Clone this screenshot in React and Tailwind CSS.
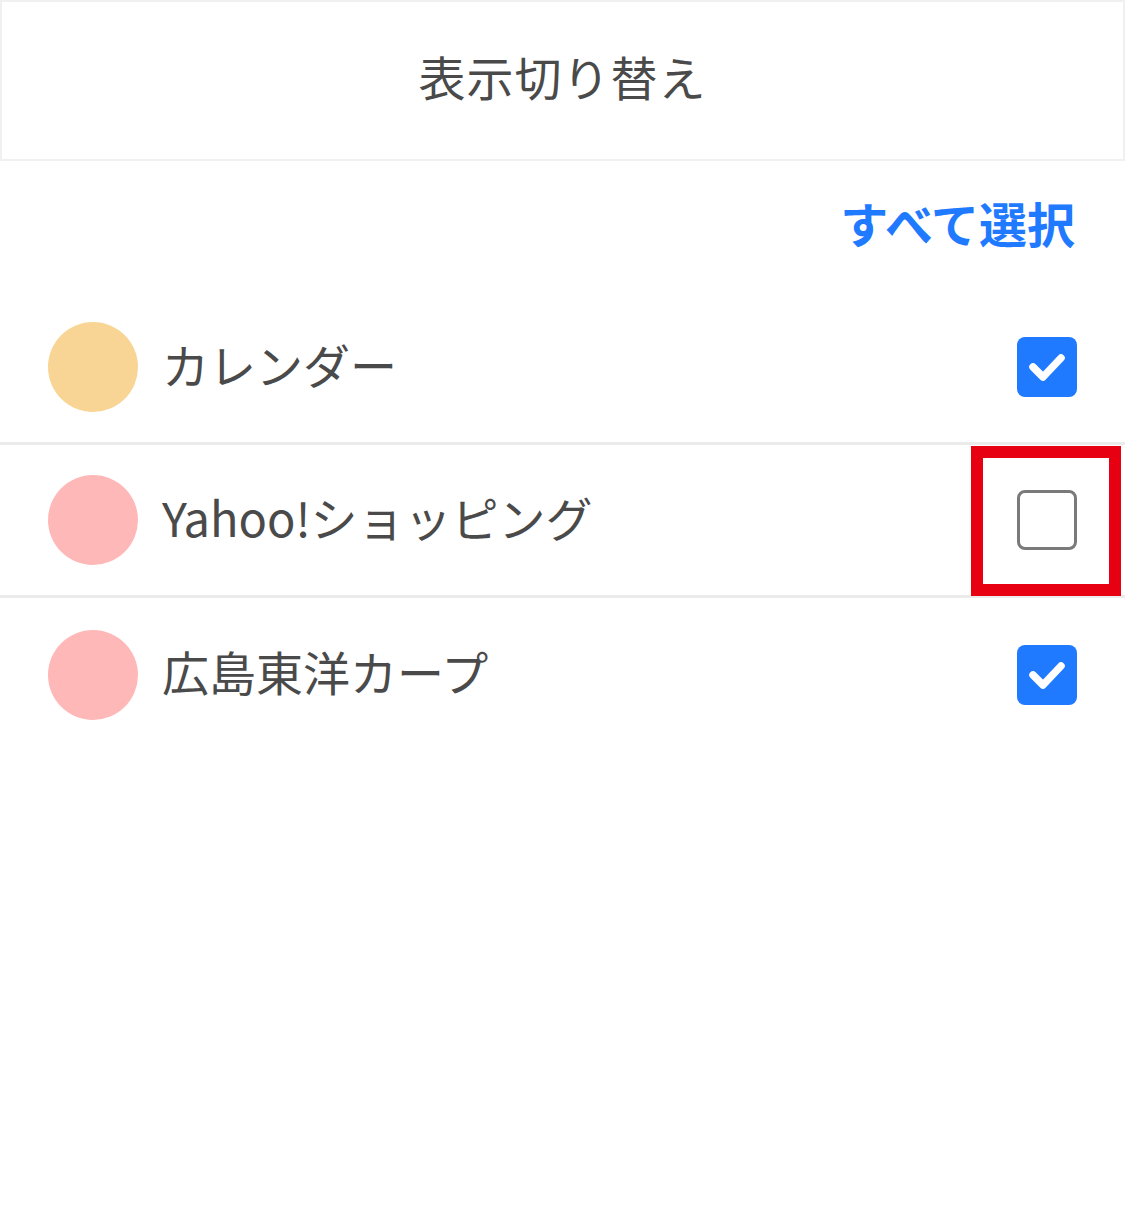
// App.jsx
const items = [
  { id: "calendar", name: "カレンダー", color: "bg-[#f8d594]", checked: true },
  { id: "yahoo", name: "Yahoo!ショッピング", color: "bg-[#ffb8b8]", checked: false, marked: true },
  { id: "carp", name: "広島東洋カープ", color: "bg-[#ffb8b8]", checked: true },
];

function CheckBox({ checked }) {
  if (!checked) {
    return <div className="w-[60px] h-[60px] rounded-[8px] border-[3px] border-[#7a7a7a] bg-white" />;
  }
  return (
    <div className="w-[60px] h-[60px] rounded-[8px] bg-[#1f7aff] flex items-center justify-center">
      <svg width="60" height="60" viewBox="0 0 60 60">
        <path d="M16 30 L26 40 L44 21" fill="none" stroke="white" strokeWidth="7.5" strokeLinecap="round" strokeLinejoin="round" />
      </svg>
    </div>
  );
}

export default function App() {
  return (
    <div className="w-[1125px] min-h-[1227px] bg-white text-[#4a4a4a] font-['Noto_Sans_CJK_JP','Noto_Sans',sans-serif]">
      {/* header */}
      <div className="h-[161px] border-2 border-[#f0f0f0] flex items-center justify-center">
        <h1 className="text-[47px] leading-none tracking-[1px] pb-[10px]">表示切り替え</h1>
      </div>

      <div className="h-[131px] flex items-center justify-end pr-[50px]">
        <button className="text-[48px] leading-none font-bold text-[#1f7aff] pb-[10px]">すべて選択</button>
      </div>

      <ul>
        {items.map((item, i) => (
          <li
            key={item.id}
            className={`relative h-[153px] flex items-center pl-[48px] pr-[48px] ${i < items.length - 1 ? "border-b-[3px] border-[#ebebeb]" : ""}`}
          >
            <span className={`w-[90px] h-[90px] rounded-full ${item.color}`} />
            <span className="ml-[24px] text-[47px] leading-none flex-1 pb-[8px]">{item.name}</span>
            <CheckBox checked={item.checked} />
            {item.marked && (
              <div className="absolute right-[4px] top-[1px] w-[150px] h-[150px] border-[12px] border-[#e60012]" />
            )}
          </li>
        ))}
      </ul>
    </div>
  );
}
